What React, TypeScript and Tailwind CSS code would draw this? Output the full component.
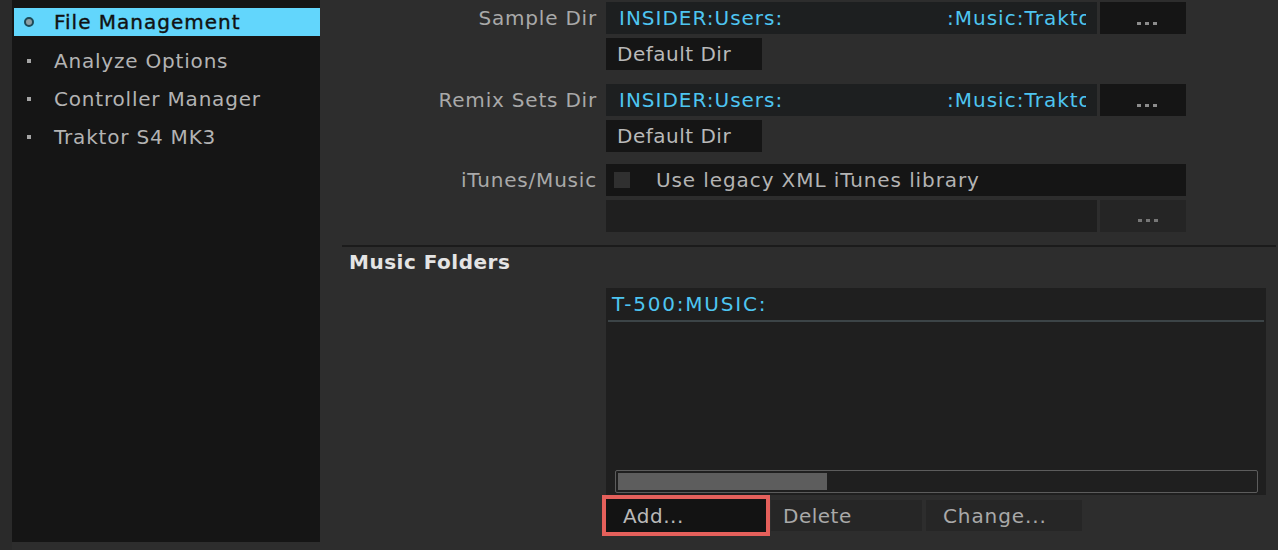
import React from "react";

function Dots({ color }: { color: string }) {
  return (
    <div className="flex gap-[4px]">
      <div className="w-[4px] h-[3px]" style={{ backgroundColor: color }} />
      <div className="w-[4px] h-[3px]" style={{ backgroundColor: color }} />
      <div className="w-[4px] h-[3px]" style={{ backgroundColor: color }} />
    </div>
  );
}

function Label({ text }: { text: string }) {
  return (
    <div className="w-[286px] h-[32px] flex items-center justify-end pr-[9px] text-[20px] tracking-[0.8px] text-[#a9a9a9] whitespace-nowrap">
      {text}
    </div>
  );
}

function PathRow({ label }: { label: string }) {
  return (
    <div className="flex">
      <Label text={label} />
      <div className="w-[491px] h-[32px] bg-[#1d1f20] flex items-center pl-[13px] text-[20px] tracking-[1px] text-[#4ec5f1] whitespace-nowrap overflow-hidden">
        <span>INSIDER:Users:</span>
        <div className="ml-auto mr-[11px] w-[139px] overflow-hidden whitespace-nowrap">:Music:Traktor</div>
      </div>
      <div className="ml-[3px] w-[86px] h-[32px] bg-[#151515] flex items-end pb-[9px] pl-[37px]">
        <Dots color="#8c8c8c" />
      </div>
    </div>
  );
}

function DefaultDir({ className }: { className: string }) {
  return (
    <div className={`ml-[286px] w-[156px] h-[32px] bg-[#151515] flex items-center pl-[11px] text-[20px] tracking-[0.5px] text-[#b9b9b9] ${className}`}>
      Default Dir
    </div>
  );
}

export default function App() {
  const items = ["Analyze Options", "Controller Manager", "Traktor S4 MK3"];
  return (
    <div className="flex w-[1278px] h-[550px] bg-[#2d2d2d] overflow-hidden font-['DejaVu_Sans',sans-serif]">
      <div className="w-[12px] h-full bg-[#2a2a2a]" />
      <aside className="w-[308px] h-[542px] bg-[#151515] pt-[8px]">
        <div className="ml-[2px] h-[28px] bg-[#62d6fc] flex items-center">
          <div className="ml-[10px] w-[10px] h-[10px] rounded-full border-2 border-[#1d4a58] bg-[#8d9ea3]" />
          <span className="ml-[20px] text-[20px] tracking-[1px] text-[#111111] [-webkit-text-stroke:0.4px_#111111]">File Management</span>
        </div>
        <div className="mt-[6px]">
          {items.map((t) => (
            <div key={t} className="h-[38px] flex items-center">
              <div className="ml-[15px] w-[4px] h-[4px] bg-[#a5a5a5]" />
              <span className="ml-[23px] text-[20px] tracking-[0.8px] text-[#b3b3b3]">{t}</span>
            </div>
          ))}
        </div>
      </aside>
      <main className="flex-1 flex flex-col pt-[2px]">
        <PathRow label="Sample Dir" />
        <DefaultDir className="mt-[4px]" />
        <div className="mt-[14px]">
          <PathRow label="Remix Sets Dir" />
        </div>
        <DefaultDir className="mt-[4px]" />
        <div className="mt-[12px] flex">
          <Label text="iTunes/Music" />
          <div className="w-[580px] h-[32px] bg-[#151515] flex items-center">
            <div className="ml-[8px] w-[16px] h-[16px] bg-[#303030]" />
            <span className="ml-[26px] text-[20px] tracking-[0.9px] text-[#b3b3b3] whitespace-nowrap">Use legacy XML iTunes library</span>
          </div>
        </div>
        <div className="mt-[4px] ml-[286px] flex">
          <div className="w-[491px] h-[32px] bg-[#1f1f1f]" />
          <div className="ml-[3px] w-[86px] h-[32px] bg-[#252525] flex items-end pb-[10px] pl-[38px]">
            <Dots color="#767676" />
          </div>
        </div>
        <div className="mt-[13px] ml-[22px] mr-[2px] h-[2px] bg-[#1b1b1b]" />
        <div className="h-[30px] flex items-center pl-[29px] text-[20px] font-bold tracking-[0.5px] text-[#e4e4e4]">
          Music Folders
        </div>
        <div className="mt-[11px] ml-[286px] w-[660px] h-[207px] bg-[#1f1f1f] flex flex-col">
          <div className="h-[32px] flex items-center pl-[6px] text-[20px] tracking-[1.8px] text-[#4ec5f1]">T-500:MUSIC:</div>
          <div className="mx-[2px] h-[2px] bg-[#3c4447]" />
          <div className="flex-1" />
          <div className="ml-[9px] mr-[8px] mb-[2px] h-[23px] border border-[#5c5c5c] rounded-[2px] p-[2px]">
            <div className="w-[209px] h-full bg-[#5d5d5d]" />
          </div>
        </div>
        <div className="ml-[282px] flex items-center">
          <div className="w-[168px] h-[41px] border-4 border-[#e5605b] bg-[#131313] flex items-center pl-[17px] text-[20px] tracking-[0.5px] text-[#b9b9b9]">
            Add...
          </div>
          <div className="ml-[1px] w-[151px] h-[31px] bg-[#262626] flex items-center pl-[12px] text-[20px] tracking-[0.5px] text-[#a9a9a9]">
            Delete
          </div>
          <div className="ml-[4px] w-[156px] h-[31px] bg-[#262626] flex items-center pl-[17px] text-[20px] tracking-[0.9px] text-[#a9a9a9]">
            Change...
          </div>
        </div>
      </main>
    </div>
  );
}
